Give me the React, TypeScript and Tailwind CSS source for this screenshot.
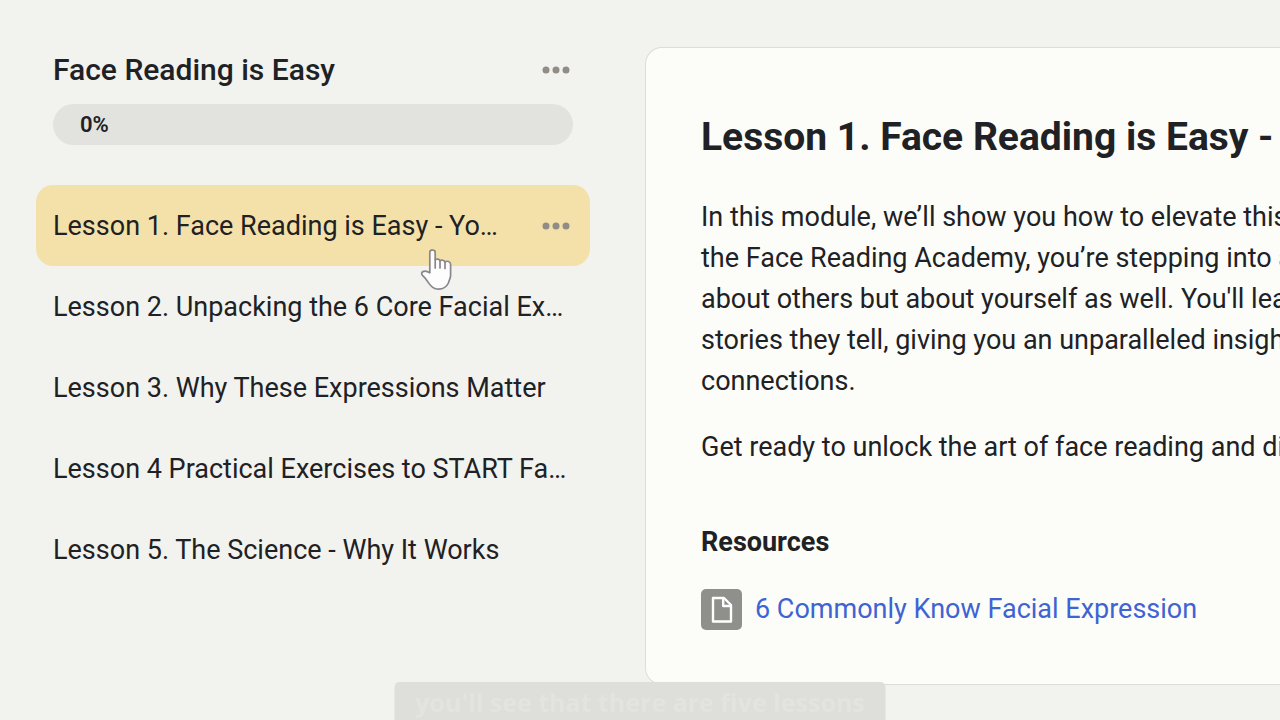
const lessons = [
  "Lesson 1. Face Reading is Easy - You Already Do It",
  "Lesson 2. Unpacking the 6 Core Facial Expressions",
  "Lesson 3. Why These Expressions Matter",
  "Lesson 4 Practical Exercises to START Face Reading",
  "Lesson 5. The Science - Why It Works",
];

const introLines = [
  "In this module, we’ll show you how to elevate this",
  "the Face Reading Academy, you’re stepping into a",
  "about others but about yourself as well. You'll learn",
  "stories they tell, giving you an unparalleled insight",
  "connections.",
];

function MoreButton({ label }: { label: string }) {
  return (
    <button type="button" aria-label={label} className="flex h-8 w-[34px] shrink-0 items-center justify-center text-[#918d86]">
      <svg width="28" height="8" viewBox="0 0 28 8" fill="currentColor" aria-hidden="true">
        <circle cx="4" cy="4" r="3.5" />
        <circle cx="14" cy="4" r="3.5" />
        <circle cx="24" cy="4" r="3.5" />
      </svg>
    </button>
  );
}

function HandCursor() {
  return (
    <svg
      className="pointer-events-none absolute left-[420px] top-[248px]"
      width="34"
      height="44"
      viewBox="0 0 34 44"
      aria-hidden="true"
    >
      <path
        d="M9.8 4.2C9.8 1.2 15.2 1.2 15.2 4.4V11.6C17 10.6 19.3 11.2 19.8 12.6C21.8 11.6 24.3 12.2 24.8 13.8C27.2 12.6 30.6 13.4 30.6 16.6V27.5C30.6 30 29 32.4 28.4 35C26.4 39.2 22.4 41.5 17 41C13.2 40.6 11 38.4 9 35.4C7 32.2 5.2 29.8 2.5 27.4C-.2 24.4 4 21.2 9.8 24.8Z"
        fill="#fdfdfd"
        stroke="#8a868c"
        strokeWidth="1.7"
        strokeLinejoin="round"
      />
      <path d="M15.2 11.5V20M20 13V20M25 14V20.5" fill="none" stroke="#8a868c" strokeWidth="1.7" strokeLinecap="round" />
    </svg>
  );
}

export default function App() {
  return (
    <div className="relative flex min-h-screen items-start overflow-hidden bg-[#f2f2ee] font-['Roboto',sans-serif] text-[27px] leading-[41px] text-[#202124]">
      <aside className="ml-9 mt-[50px] w-[554px] shrink-0">
        <header className="px-[17px]">
          <div className="flex h-10 items-center justify-between">
            <h2 className="text-[30px] font-medium leading-10">Face Reading is Easy</h2>
            <MoreButton label="Course options" />
          </div>
          <div
            role="progressbar"
            aria-label="Course progress"
            aria-valuenow={0}
            className="mt-[14px] h-[41px] rounded-full bg-[#e2e3df] px-[27px] text-[22px] font-semibold"
          >
            0%
          </div>
        </header>
        <nav className="mt-10">
          <ul>
            {lessons.map((title, i) => (
              <li
                key={title}
                className={`flex h-[81px] items-center rounded-[17px] px-[17px] ${i === 0 ? "bg-[#f4e1aa]" : ""}`}
              >
                <a href={`#lesson-${i + 1}`} className="min-w-0 flex-1 truncate pt-[2px]">
                  {title}
                </a>
                {i === 0 && (
                  <span className="ml-8 flex">
                    <MoreButton label="Lesson options" />
                  </span>
                )}
              </li>
            ))}
          </ul>
        </nav>
      </aside>

      <main className="ml-[55px] mt-[47px] min-w-0 flex-1 overflow-hidden rounded-l-[17px] border border-r-0 border-[#dcddd8] bg-[#fcfdf9] pb-[54px] pl-[55px] pt-[65px]">
        <h1 className="whitespace-nowrap text-[39px] font-bold leading-[48px]">Lesson 1. Face Reading is Easy -</h1>
        <p className="mt-9 whitespace-nowrap">
          {introLines.map((line) => (
            <span key={line} className="block">
              {line}
            </span>
          ))}
        </p>
        <p className="mt-[25px] whitespace-nowrap">Get ready to unlock the art of face reading and discover</p>
        <h3 className="mt-[54px] font-bold">Resources</h3>
        <a href="#resource" className="mt-[26px] flex items-center gap-[13px] whitespace-nowrap text-[#3f63d2]">
          <span className="flex size-[41px] shrink-0 items-center justify-center rounded-[5px] bg-[#8f908b]">
            <svg width="22" height="28" viewBox="0 0 22 28" fill="none" stroke="#fff" strokeWidth="2.4" strokeLinejoin="round" aria-hidden="true">
              <path d="M2 2H13L20 9V25.5H2Z" />
              <path d="M12.2 2V10H20" />
            </svg>
          </span>
          6 Commonly Know Facial Expression
        </a>
      </main>

      <HandCursor />
      <div className="absolute left-1/2 top-[682px] flex h-[52px] w-[491px] -translate-x-1/2 justify-center whitespace-nowrap rounded-t-[5px] bg-[#dcddd8]/95 font-['Open_Sans',sans-serif] text-[25px] font-bold text-[#e3e4df]">
        you'll see that there are five lessons
      </div>
    </div>
  );
}
